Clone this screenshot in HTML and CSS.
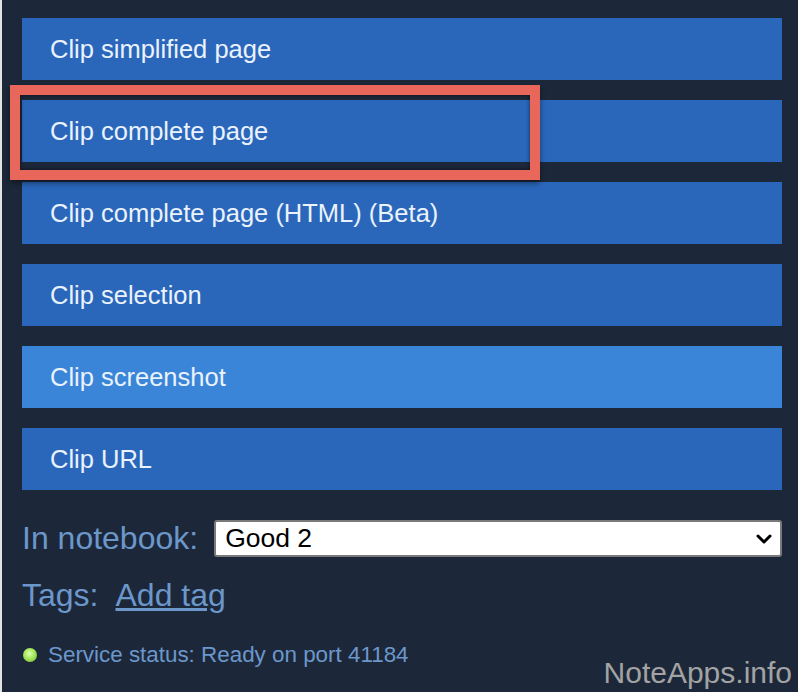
FILE: index.html
```html
<!DOCTYPE html>
<html lang="en">
<head>
    <meta charset="UTF-8">
    <meta name="viewport" content="width=device-width, initial-scale=1.0">
    <title>Web Clipper</title>
    <link rel="stylesheet" href="styles.css">
</head>
<body>
    <div class="page-edge"></div>
    <main class="popup">
        <section class="clip-list">
            <button class="clip-btn">Clip simplified page</button>
            <button class="clip-btn">Clip complete page</button>
            <button class="clip-btn">Clip complete page (HTML) (Beta)</button>
            <button class="clip-btn">Clip selection</button>
            <button class="clip-btn hover">Clip screenshot</button>
            <button class="clip-btn">Clip URL</button>
            <div class="highlight"></div>
        </section>

        <div class="notebook-row">
            <label class="field-label" for="notebook">In notebook:</label>
            <div class="select-box">
                <span id="notebook">Good 2</span>
                <svg class="chevron" width="16" height="10" viewBox="0 0 16 10">
                    <path d="M2 2 L8 8 L14 2" fill="none" stroke="#000" stroke-width="3" stroke-linecap="round" stroke-linejoin="round"/>
                </svg>
            </div>
        </div>

        <div class="tags-row">
            <span class="field-label">Tags:</span>
            <a href="#" class="add-tag">Add tag</a>
        </div>

        <div class="status">
            <span class="status-dot"></span>
            <span>Service status: Ready on port 41184</span>
        </div>
    </main>
    <div class="watermark">NoteApps.info</div>
</body>
</html>
```

FILE: styles.css
```css
body {
    font-family: "Liberation Sans", Arial, sans-serif;
    margin: 0;
    padding: 0;
    background-color: #1c283a;
    width: 798px;
    height: 692px;
    overflow: hidden;
    display: flex;
}

.page-edge {
    width: 2px;
    background-color: #e4e4e4;
    flex-shrink: 0;
}

.popup {
    flex: 1;
    padding: 18px 16px 0 20px;
}

.clip-list {
    position: relative;
    display: flex;
    flex-direction: column;
    gap: 20px;
}

.clip-btn {
    height: 62px;
    padding: 0 0 0 28px;
    border: none;
    text-align: left;
    background-color: #2a67bb;
    color: #eaf2fc;
    font-family: "Liberation Sans", Arial, sans-serif;
    font-size: 25.5px;
    cursor: pointer;
}

.clip-btn.hover {
    background-color: #3b85d9;
}

.highlight {
    position: absolute;
    left: -12px;
    top: 67px;
    width: 530px;
    height: 95px;
    box-sizing: border-box;
    border: 10px solid #e9665a;
    box-shadow: 0 3px 6px rgba(0, 0, 0, 0.45), inset 0 0 4px rgba(0, 0, 0, 0.6);
}

.field-label {
    color: #6c97cb;
    font-size: 32px;
    line-height: 37px;
}

.notebook-row {
    display: flex;
    align-items: center;
    gap: 16px;
    margin-top: 30px;
}

.select-box {
    flex: 1;
    height: 37px;
    box-sizing: border-box;
    background-color: #fff;
    border: 2px solid #7a7a7a;
    border-radius: 3px;
    display: flex;
    align-items: center;
    justify-content: space-between;
    padding: 0 8px 0 9px;
    font-size: 26.5px;
    color: #000;
}

.tags-row {
    display: flex;
    align-items: center;
    gap: 17px;
    margin-top: 20px;
}

.add-tag {
    color: #6c97cb;
    font-size: 32px;
    line-height: 37px;
}

.status {
    display: flex;
    align-items: center;
    gap: 11px;
    margin-top: 28px;
    color: #6c97cb;
    font-size: 22.4px;
    line-height: 26px;
}

.status-dot {
    width: 14px;
    height: 14px;
    border-radius: 50%;
    background: radial-gradient(circle at 45% 40%, #dcffb0 0%, #a6e85a 45%, #6bb52a 100%);
    margin-left: 1px;
}

.watermark {
    position: absolute;
    right: 6px;
    bottom: 2px;
    color: #a3a3a3;
    font-size: 30px;
}
```
